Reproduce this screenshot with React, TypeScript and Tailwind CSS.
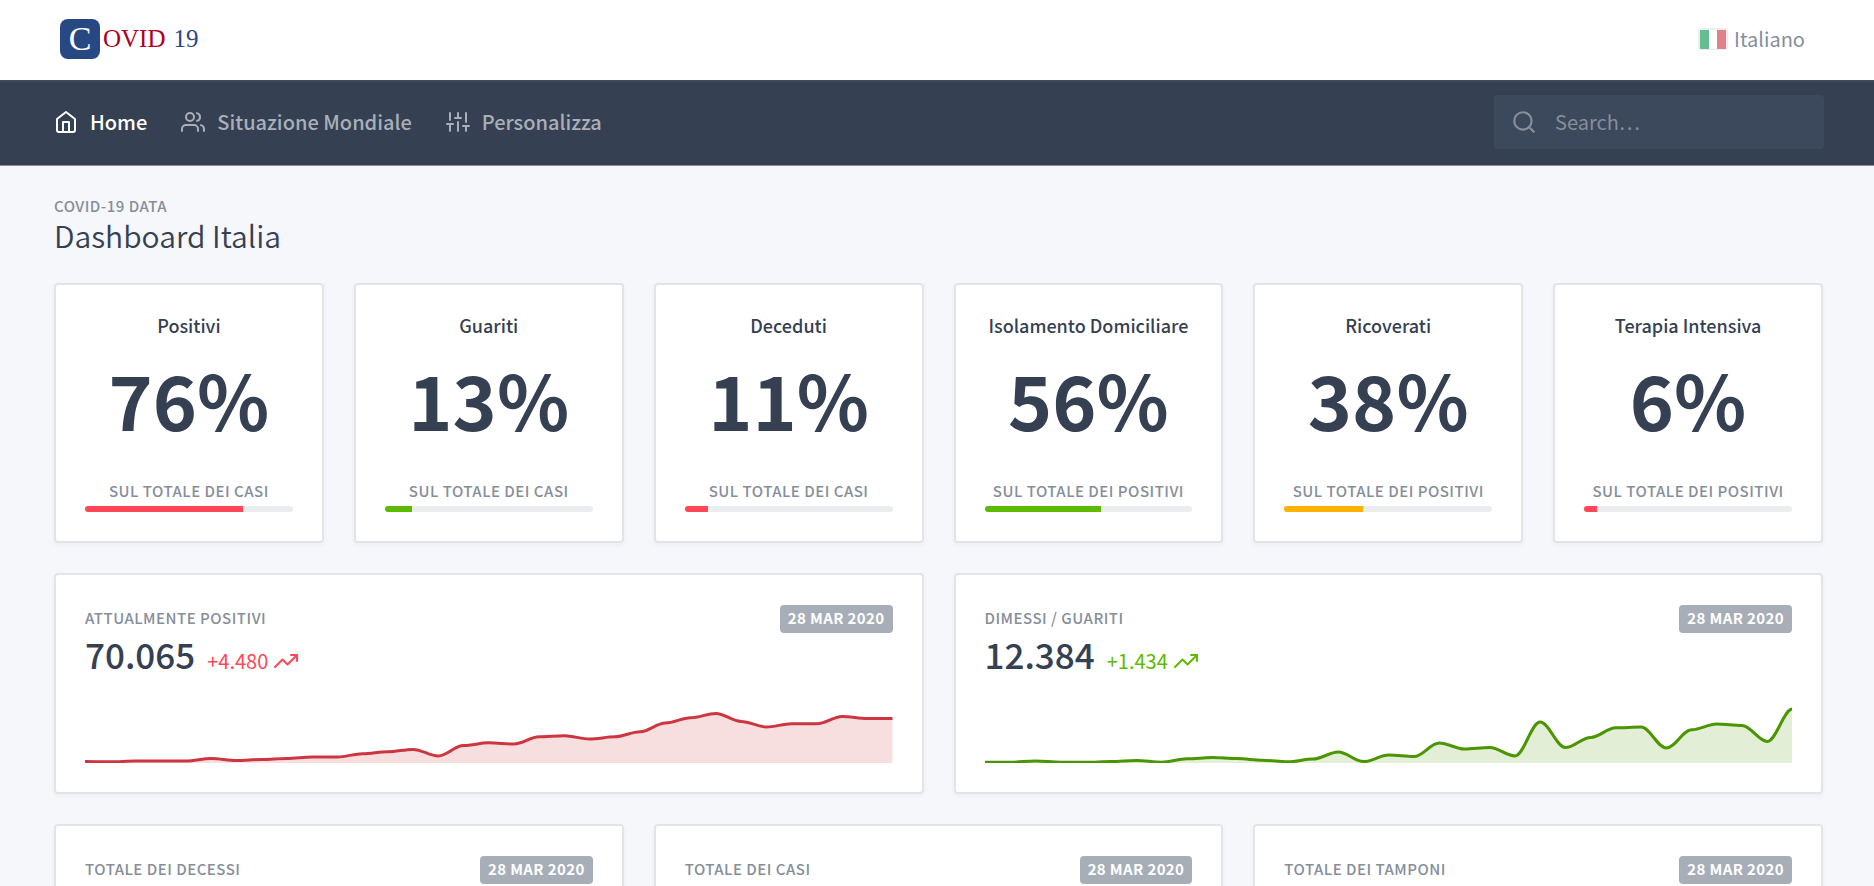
import type { ReactNode } from 'react';

const stats = [
  { title: 'Positivi', value: 76, note: 'Sul totale dei casi', bar: 'bg-[#ff4757]' },
  { title: 'Guariti', value: 13, note: 'Sul totale dei casi', bar: 'bg-[#5eba00]' },
  { title: 'Deceduti', value: 11, note: 'Sul totale dei casi', bar: 'bg-[#ff4757]' },
  { title: 'Isolamento Domiciliare', value: 56, note: 'Sul totale dei positivi', bar: 'bg-[#5eba00]' },
  { title: 'Ricoverati', value: 38, note: 'Sul totale dei positivi', bar: 'bg-[#ffb100]' },
  { title: 'Terapia Intensiva', value: 6, note: 'Sul totale dei positivi', bar: 'bg-[#ff4757]' },
];

const positivi = [
  1.4, 1.2, 2, 2, 2, 4.6, 2.4, 3.6, 4.6, 6, 6, 9.2, 11.2, 13.6, 7, 17.4, 20.2, 19, 26.2, 27.2, 24, 26.2, 31.2, 40,
  45.2, 49.6, 41.6, 36, 39.2, 39.2, 46.6, 44.6, 44.6,
];

const guariti = [
  0.8, 0.8, 2, 0.8, 0.8, 1.4, 2.6, 0.8, 4.2, 5.4, 4.4, 2.8, 1.2, 4, 11, 1.4, 8, 6.4, 20, 14, 15.6, 7, 41, 15.4, 25.6,
  35.2, 36, 15, 33.2, 39, 37.6, 21.6, 54,
];

const CHART_W = 807;
const CHART_H = 60;

function smoothLine(values: number[]) {
  const step = CHART_W / (values.length - 1);
  let d = `M0 ${CHART_H - values[0]}`;
  for (let i = 1; i < values.length; i++) {
    const x0 = (i - 1) * step;
    const x1 = i * step;
    const y0 = CHART_H - values[i - 1];
    const y1 = CHART_H - values[i];
    d += ` C${x0 + step * 0.35} ${y0} ${x1 - step * 0.35} ${y1} ${x1} ${y1}`;
  }
  return d;
}

function AreaChart({ values, color, label }: { values: number[]; color: string; label: string }) {
  const line = smoothLine(values);
  return (
    <svg
      role="img"
      aria-label={label}
      className="block h-[60px] w-full overflow-hidden"
      viewBox={`0 0 ${CHART_W} ${CHART_H}`}
      preserveAspectRatio="none"
    >
      <path d={`${line} L${CHART_W} ${CHART_H} L0 ${CHART_H} Z`} fill={color} fillOpacity="0.16" />
      <path d={line} fill="none" stroke={color} strokeWidth="3" />
    </svg>
  );
}

function Icon({ className, children }: { className: string; children: ReactNode }) {
  return (
    <svg
      aria-hidden="true"
      className={className}
      viewBox="0 0 24 24"
      fill="none"
      stroke="currentColor"
      strokeWidth="2"
      strokeLinecap="round"
      strokeLinejoin="round"
    >
      {children}
    </svg>
  );
}

function Card({ children }: { children: ReactNode }) {
  return (
    <section className="rounded-[4px] border-2 border-[#e2e4e8] bg-white p-[29px] shadow-[0_2px_4px_rgba(53,64,82,0.05)]">
      {children}
    </section>
  );
}

function CardHead({ title }: { title: string }) {
  return (
    <div className="flex items-start justify-between">
      <h2 className="text-[15px] leading-[28px] font-medium tracking-[0.5px] text-[#868e99] uppercase">{title}</h2>
      <span className="mt-px rounded-[4px] bg-[#a8aeb7] px-2 pb-[2px] text-[15px] leading-[26px] font-bold tracking-wide text-white uppercase">
        28 Mar 2020
      </span>
    </div>
  );
}

function TrendCard({
  title,
  total,
  delta,
  tone,
  values,
  color,
}: {
  title: string;
  total: string;
  delta: string;
  tone: string;
  values: number[];
  color: string;
}) {
  return (
    <Card>
      <CardHead title={title} />
      <div className="mb-7 flex items-baseline gap-3">
        <span className="text-[35px] leading-[42px] font-medium">{total}</span>
        <span className={`inline-flex items-center gap-[6px] text-[20px] leading-[28px] ${tone}`}>
          {delta}
          <Icon className="size-6">
            <path d="M23 6l-9.500 9.500-5-5L1 18" />
            <path d="M17 6h6v6" />
          </Icon>
        </span>
      </div>
      <AreaChart values={values} color={color} label={title} />
    </Card>
  );
}

export default function App() {
  return (
    <div className="min-h-screen bg-[#f5f7fb] font-['Noto_Sans_CJK_SC','Noto_Sans_CJK_JP',sans-serif] text-[#354052]">
      <header className="flex h-20 items-center justify-between bg-white pr-[69px] pb-[3px] pl-[60px]">
        <a href="#" className="flex items-center gap-[3px] font-['Liberation_Serif',serif] text-[25px] leading-[40px]">
          <span className="flex size-10 items-center justify-center rounded-[8px] bg-[#274883] text-[34px] text-white">
            C
          </span>
          <span className="text-[#b00020]">OVID</span>
          <span className="ml-[5px] text-[#274883]">19</span>
        </a>
        <button type="button" className="flex items-center gap-[6px] text-[20px] leading-[30px] text-[#868e99]">
          <svg aria-hidden="true" className="h-[22px] w-[30px]" viewBox="0 0 30 22">
            <rect width="30" height="22" rx="3" fill="#eeeeef" />
            <path d="M2 2h9v19H2z" fill="#66bd91" />
            <path d="M11 2h8v19h-8z" fill="#fff" />
            <path d="M19 2h9v19h-9z" fill="#e18086" />
          </svg>
          Italiano
        </button>
      </header>

      <nav className="flex h-[86px] items-center justify-between border-t-2 border-b border-t-[#3c4a5c] border-b-[#868e99] bg-[#354052] pr-[50px] pb-1 pl-[54px] text-[20px] leading-[30px] font-medium text-[#a9afb8]">
        <div className="flex items-center gap-[34px]">
          <a href="#" className="flex items-center gap-3 text-white">
            <Icon className="size-6">
              <path d="M3 9l9-7 9 7v11a2 2 0 0 1-2 2H5a2 2 0 0 1-2-2z" />
              <path d="M9 22V12h6v10" />
            </Icon>
            Home
          </a>
          <a href="#" className="flex items-center gap-3">
            <Icon className="size-6">
              <path d="M17 21v-2a4 4 0 0 0-4-4H5a4 4 0 0 0-4 4v2" />
              <circle cx="9" cy="7" r="4" />
              <path d="M23 21v-2a4 4 0 0 0-3-3.870" />
              <path d="M16 3.130a4 4 0 0 1 0 7.750" />
            </Icon>
            Situazione Mondiale
          </a>
          <a href="#" className="flex items-center gap-3">
            <Icon className="size-6">
              <path d="M4 21v-7M4 10V3M12 21v-9M12 8V3M20 21v-5M20 12V3M1 14h6M9 8h6M17 16h6" />
            </Icon>
            Personalizza
          </a>
        </div>
        <label className="flex h-[54px] w-[330px] items-center gap-[18px] rounded-[4px] bg-[#3c485b] px-[17px] font-normal text-[#868e99]">
          <Icon className="size-[26px] shrink-0">
            <circle cx="11" cy="11" r="8" />
            <path d="M21 21l-4.350-4.350" />
          </Icon>
          <input
            type="text"
            aria-label="Search"
            placeholder="Search…"
            className="w-full min-w-0 bg-transparent outline-none placeholder:text-[#868e99]"
          />
        </label>
      </nav>

      <main className="pt-[29px] pr-[51px] pl-[54px]">
        <p className="text-[15px] leading-[22px] font-medium tracking-[0.5px] text-[#868e99] uppercase">Covid-19 Data</p>
        <h1 className="text-[30px] leading-[36px] font-[350]">Dashboard Italia</h1>

        <div className="mt-[30px] grid grid-cols-6 gap-[30px]">
          {stats.map((s) => (
            <Card key={s.title}>
              <div className="flex flex-col items-center">
                <h2 className="text-[18px] leading-[22px] font-medium">{s.title}</h2>
                <p className="mt-[18px] mb-[35px] text-[75px] leading-[90px] font-bold">{s.value}%</p>
                <p className="text-[15px] leading-[24px] font-medium tracking-[0.5px] whitespace-nowrap text-[#868e99] uppercase">
                  {s.note}
                </p>
                <div className="mt-[3px] h-[6px] w-full overflow-hidden rounded-full bg-[#ebeced]">
                  <div className={`h-full ${s.bar}`} style={{ width: `${s.value}%` }} />
                </div>
              </div>
            </Card>
          ))}
        </div>

        <div className="mt-[30px] grid grid-cols-2 gap-[30px]">
          <TrendCard
            title="Attualmente positivi"
            total="70.065"
            delta="+4.480"
            tone="text-[#ff4757]"
            values={positivi}
            color="#cd3640"
          />
          <TrendCard
            title="Dimessi / Guariti"
            total="12.384"
            delta="+1.434"
            tone="text-[#5eba00]"
            values={guariti}
            color="#4b9500"
          />
        </div>

        <div className="mt-[30px] grid grid-cols-3 gap-[30px]">
          {['Totale dei decessi', 'Totale dei casi', 'Totale dei tamponi'].map((t) => (
            <Card key={t}>
              <CardHead title={t} />
            </Card>
          ))}
        </div>
      </main>
    </div>
  );
}
